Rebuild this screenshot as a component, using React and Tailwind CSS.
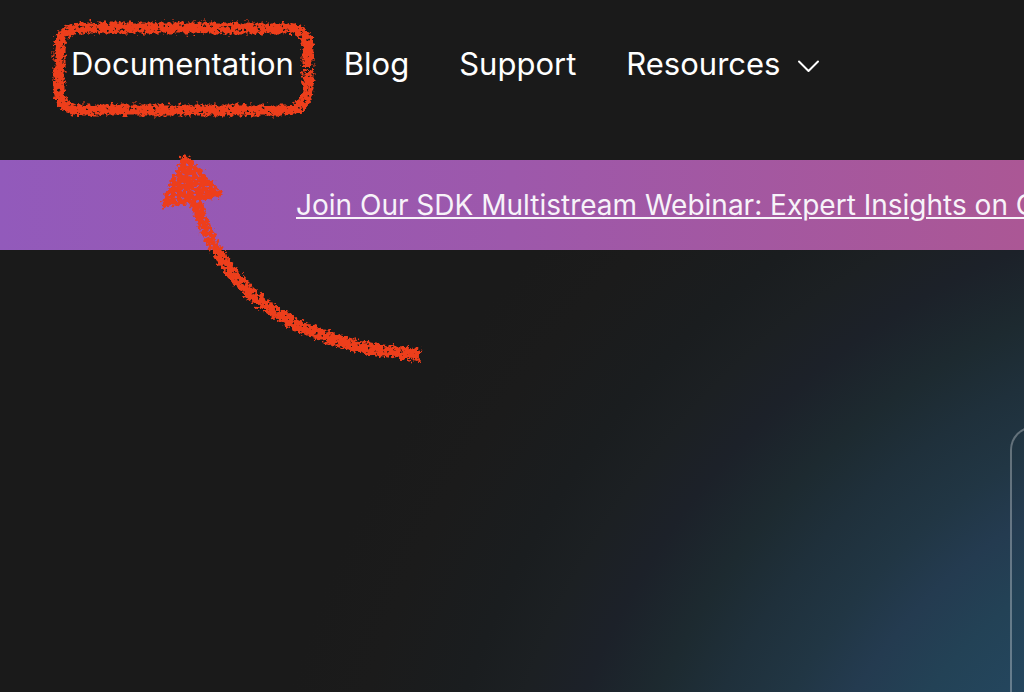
import React from "react";

const links = ["Documentation", "Blog", "Support"];

function Nav() {
  return (
    <header className="flex h-40 shrink-0 items-start pt-10 pl-[71px]">
      <nav className="flex items-center gap-[50px] text-[31px] leading-12 whitespace-nowrap text-white">
        {links.map((label) => (
          <a key={label} href="#">
            {label}
          </a>
        ))}
        <button type="button" className="flex items-center gap-4">
          Resources
          <svg width="24" height="24" viewBox="0 0 24 24" fill="none" className="mt-1" aria-hidden="true">
            <path d="M3 7.5 12.5 17 22 7.5" stroke="currentColor" strokeWidth="2" strokeLinecap="round" strokeLinejoin="round" />
          </svg>
        </button>
      </nav>
    </header>
  );
}

function Banner() {
  return (
    <div className="flex h-[90px] shrink-0 items-center overflow-hidden bg-[linear-gradient(90deg,#925abb_0%,#9d58ab_50%,#ab5795_100%)] pl-74">
      <a
        href="#"
        className="text-[28px] leading-10 whitespace-nowrap text-[#f7f3f9] underline decoration-2 underline-offset-2"
      >
        Join Our SDK Multistream Webinar: Expert Insights on C
      </a>
    </div>
  );
}

function Hero() {
  return (
    <main className="flex grow overflow-hidden bg-[radial-gradient(circle_at_1312px_722px,#265078_300px,#24465e_402px,#234256_475px,#243b50_536px,#213644_590px,#1f303b_652px,#1d2a30_710px,#1c2129_779px,#1c2023_835px,#1a1d1f_892px,#1b1b1b_985px,#1a1a1a_1060px)] pt-44 pl-[1010px]">
      <div className="w-150 shrink-0 rounded-tl-3xl border-t-2 border-l-2 border-white/30" />
    </main>
  );
}

function Annotations() {
  return (
    <svg
      width="440"
      height="380"
      viewBox="0 0 440 380"
      fill="none"
      className="pointer-events-none absolute top-0 left-0"
      aria-hidden="true"
    >
      <defs>
        <filter id="crayon" x="0" y="0" width="440" height="380" filterUnits="userSpaceOnUse" colorInterpolationFilters="sRGB">
          <feTurbulence type="fractalNoise" baseFrequency="0.28" numOctaves="2" seed="4" result="noise" />
          <feDisplacementMap in="SourceGraphic" in2="noise" scale="10" xChannelSelector="R" yChannelSelector="G" result="rough" />
          <feColorMatrix in="noise" type="matrix" values="0 0 0 0 0  0 0 0 0 0  0 0 0 0 0  0 0 -10 0 7.5" result="grain" />
          <feComposite in="rough" in2="grain" operator="in" result="chalk" />
          <feGaussianBlur in="chalk" stdDeviation="0.4" />
        </filter>
      </defs>
      <g filter="url(#crayon)" stroke="#ed3e1b">
        <path d="M308 67V51Q308 28 285 28H82Q59 28 59 51V88Q59 110 82 110H285Q308 110 308 88V71" strokeWidth="11" />
        <path d="M195 200C218 278 275 344 420 355" strokeWidth="12" />
        <path d="M185 158 165 204 219 194Z" fill="#ed3e1b" strokeWidth="7" strokeLinejoin="round" />
      </g>
    </svg>
  );
}

export default function App() {
  return (
    <div className="relative flex min-h-screen flex-col overflow-hidden bg-[#1a1a1a] font-[Inter,sans-serif]">
      <Nav />
      <Banner />
      <Hero />
      <Annotations />
    </div>
  );
}
